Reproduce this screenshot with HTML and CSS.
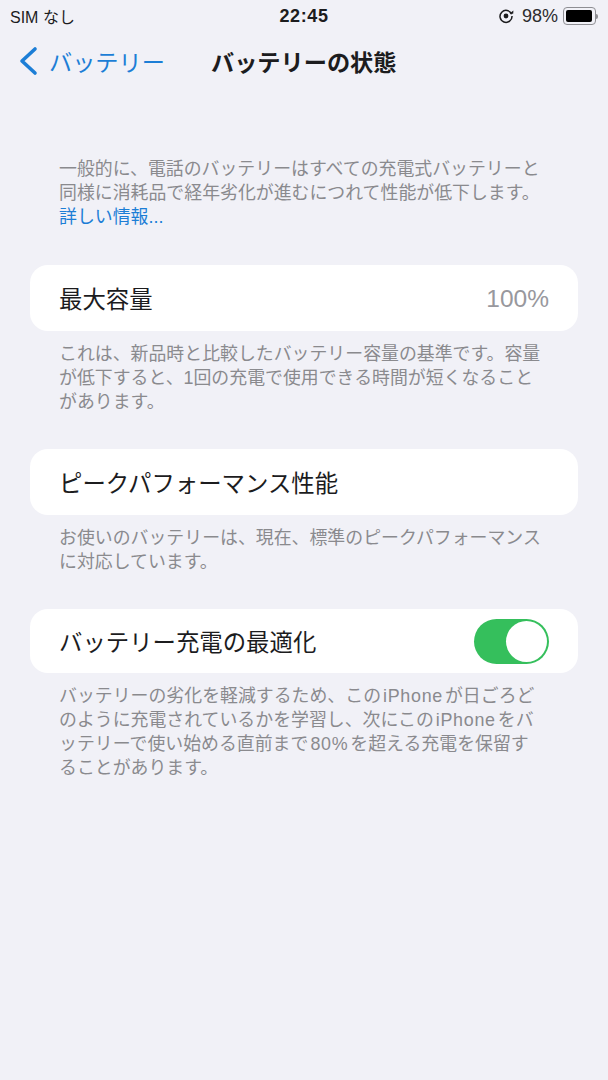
FILE: index.html
```html
<!DOCTYPE html>
<html lang="ja">
<head>
    <meta charset="UTF-8">
    <meta name="viewport" content="width=device-width, initial-scale=1.0">
    <title>バッテリーの状態</title>
    <link rel="stylesheet" href="styles.css">
</head>
<body>
    <div class="status-bar">
        <span class="status-left">SIM なし</span>
        <span class="status-time">22:45</span>
        <div class="status-right">
            <svg class="lock-icon" width="16" height="16" viewBox="0 0 16 16">
                <path d="M13.6 6.2A6 6 0 1 0 14 8" fill="none" stroke="#1c1c1e" stroke-width="1.5"/>
                <path d="M11.6 5.6l3.6.2.2-3.4z" fill="#1c1c1e"/>
                <circle cx="8" cy="8" r="2.4" fill="#1c1c1e"/>
            </svg>
            <span>98%</span>
            <div class="battery">
                <div class="battery-body"><div class="battery-level"></div></div>
                <div class="battery-cap"></div>
            </div>
        </div>
    </div>

    <div class="nav-bar">
        <div class="nav-back">
            <svg width="20" height="30" viewBox="0 0 20 30">
                <path d="M17 3L4 15l13 12" fill="none" stroke="#1c7ed6" stroke-width="3.6" stroke-linecap="round" stroke-linejoin="round"/>
            </svg>
            <span>バッテリー</span>
        </div>
        <h1 class="nav-title">バッテリーの状態</h1>
    </div>

    <p class="note note-intro">一般的に、電話のバッテリーはすべての充電式バッテリーと同様に消耗品で経年劣化が進むにつれて性能が低下します。<br><a class="more-link" href="#">詳しい情報...</a></p>

    <div class="card">
        <span>最大容量</span>
        <span class="card-value">100%</span>
    </div>
    <p class="note">これは、新品時と比較したバッテリー容量の基準です。容量が低下すると、1回の充電で使用できる時間が短くなること<br>があります。</p>

    <div class="card card-peak">
        <span>ピークパフォーマンス性能</span>
    </div>
    <p class="note">お使いのバッテリーは、現在、標準のピークパフォーマンスに対応しています。</p>

    <div class="card card-opt">
        <span>バッテリー充電の最適化</span>
        <div class="toggle"><div class="toggle-knob"></div></div>
    </div>
    <p class="note">バッテリーの劣化を軽減するため、この<span class="latin">iPhone</span>が日ごろど<br>のように充電されているかを学習し、次にこの<span class="latin">iPhone</span>をバ<br>ッテリーで使い始める直前まで<span class="latin">80%</span>を超える充電を保留す<br>ることがあります。</p>
</body>
</html>
```

FILE: styles.css
```css
body {
    margin: 0;
    height: 1080px;
    overflow: hidden;
    background-color: #f1f1f7;
    color: #1c1c1e;
    font-family: "Liberation Sans", "Noto Sans CJK JP", sans-serif;
}
.status-bar {
    display: grid;
    grid-template-columns: 1fr auto 1fr;
    align-items: center;
    height: 32px;
    padding: 0 10px;
    font-size: 16px;
}
.status-time {
    font-weight: 700;
    font-size: 18px;
    letter-spacing: 0.6px;
}
.status-right {
    display: flex;
    justify-content: flex-end;
    align-items: center;
    gap: 5px;
    font-size: 18px;
    color: #2c2c2e;
}
.lock-icon {
    margin-right: 3px;
}
.battery {
    display: flex;
    align-items: center;
}
.battery-body {
    width: 27px;
    height: 12px;
    padding: 2px;
    border: 1px solid #8e8e93;
    border-radius: 4px;
}
.battery-level {
    width: 95%;
    height: 100%;
    background-color: #000;
    border-radius: 2px;
}
.battery-cap {
    width: 2px;
    height: 5px;
    background-color: #8e8e93;
    border-radius: 0 2px 2px 0;
}
.nav-bar {
    display: flex;
    align-items: center;
    height: 58px;
    padding-left: 18px;
}
.nav-back {
    display: flex;
    align-items: center;
    gap: 11px;
    width: 193px;
    color: #1c7ed6;
    font-size: 23.2px;
}
.nav-title {
    margin: 0;
    font-size: 23.2px;
    font-weight: 700;
}
.note {
    margin: 0;
    padding: 11px 60px 0 59px;
    font-size: 17.9px;
    line-height: 24px;
    color: #8a8a8e;
}
.note-intro {
    padding-top: 67px;
    padding-bottom: 36px;
}
.latin {
    margin: 0 2px;
    letter-spacing: 0.7px;
}
.more-link {
    color: #1c7ed6;
    text-decoration: none;
}
.card {
    display: flex;
    justify-content: space-between;
    align-items: center;
    height: 66px;
    margin: 0 30px;
    padding: 0 29px;
    background-color: #fff;
    border-radius: 18px;
    font-size: 23.4px;
}
.card-value {
    padding-top: 2px;
    font-size: 24.5px;
    color: #98989d;
}
.card-peak {
    margin-top: 35px;
}
.card-opt {
    height: 64px;
    margin-top: 35px;
}
.toggle {
    width: 75px;
    height: 45px;
    padding: 2px;
    box-sizing: border-box;
    display: flex;
    justify-content: flex-end;
    background-color: #35bf5c;
    border-radius: 23px;
}
.toggle-knob {
    width: 41px;
    height: 41px;
    background-color: #fff;
    border-radius: 50%;
}
```
